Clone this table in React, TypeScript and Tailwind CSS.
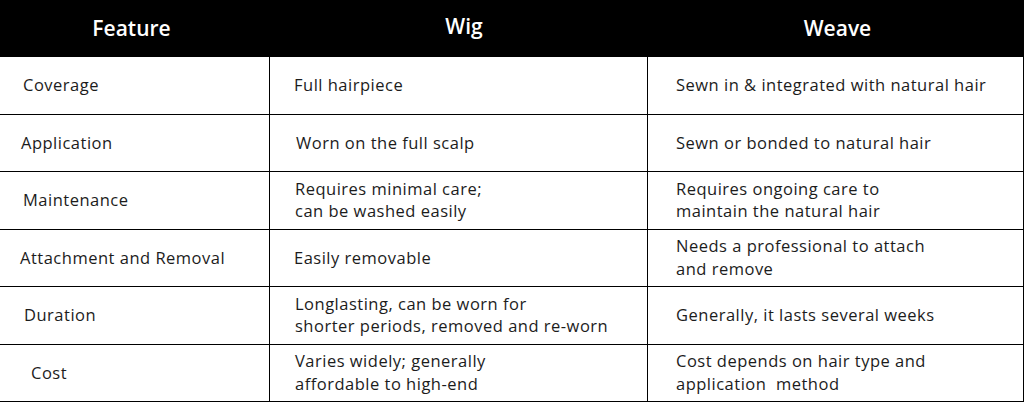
import React from "react";

type Cell = { lines: string[]; pad: string };
type Row = { cells: [Cell, Cell, Cell] };

const rows: Row[] = [
  {
    cells: [
      { lines: ["Coverage"], pad: "pl-[23px]" },
      { lines: ["Full hairpiece"], pad: "pl-[24px]" },
      { lines: ["Sewn in & integrated with natural hair"], pad: "pl-[28px]" },
    ],
  },
  {
    cells: [
      { lines: ["Application"], pad: "pl-[21px]" },
      { lines: ["Worn on the full scalp"], pad: "pl-[26px]" },
      { lines: ["Sewn or bonded to natural hair"], pad: "pl-[28px]" },
    ],
  },
  {
    cells: [
      { lines: ["Maintenance"], pad: "pl-[23px]" },
      { lines: ["Requires minimal care;", "can be washed easily"], pad: "pl-[25px]" },
      { lines: ["Requires ongoing care to", "maintain the natural hair"], pad: "pl-[28px]" },
    ],
  },
  {
    cells: [
      { lines: ["Attachment and Removal"], pad: "pl-[20px]" },
      { lines: ["Easily removable"], pad: "pl-[24px]" },
      { lines: ["Needs a professional to attach", "and remove"], pad: "pl-[28px]" },
    ],
  },
  {
    cells: [
      { lines: ["Duration"], pad: "pl-[24px]" },
      { lines: ["Longlasting, can be worn for", "shorter periods, removed and re-worn"], pad: "pl-[25px]" },
      { lines: ["Generally, it lasts several weeks"], pad: "pl-[28px]" },
    ],
  },
  {
    cells: [
      { lines: ["Cost"], pad: "pl-[31px]" },
      { lines: ["Varies widely; generally", "affordable to high-end"], pad: "pl-[25px]" },
      { lines: ["Cost depends on hair type and", "application\u00a0 method"], pad: "pl-[28px]" },
    ],
  },
];

const borderFor = ["", "border-l border-black", "border-l border-r border-black"];

export default function App() {
  return (
    <div
      className="w-[1024px] h-[409px] bg-white text-[#1c1c1c]"
      style={{ fontFamily: '"Open Sans", "Noto Sans", sans-serif' }}
    >
      <div className="grid grid-cols-[269px_378px_377px] h-[57px] bg-black text-white text-[21px] font-semibold">
        <div className="flex items-center justify-center pr-[6px] pt-[1px]">Feature</div>
        <div className="flex items-center justify-center pl-[12px] pb-[4px]">Wig</div>
        <div className="flex items-center justify-center pl-[4px] pt-[1px]">Weave</div>
      </div>
      {rows.map((row, i) => (
        <div
          key={i}
          className="grid grid-cols-[269px_378px_377px] h-[57.5px] border-b border-black"
        >
          {row.cells.map((cell, j) => (
            <div
              key={j}
              className={`flex flex-col justify-center text-[16.5px] leading-[22.5px] tracking-[0.5px] ${cell.pad} ${borderFor[j]}`}
            >
              {cell.lines.map((l, k) => (
                <span key={k} className="whitespace-pre">
                  {l}
                </span>
              ))}
            </div>
          ))}
        </div>
      ))}
    </div>
  );
}
